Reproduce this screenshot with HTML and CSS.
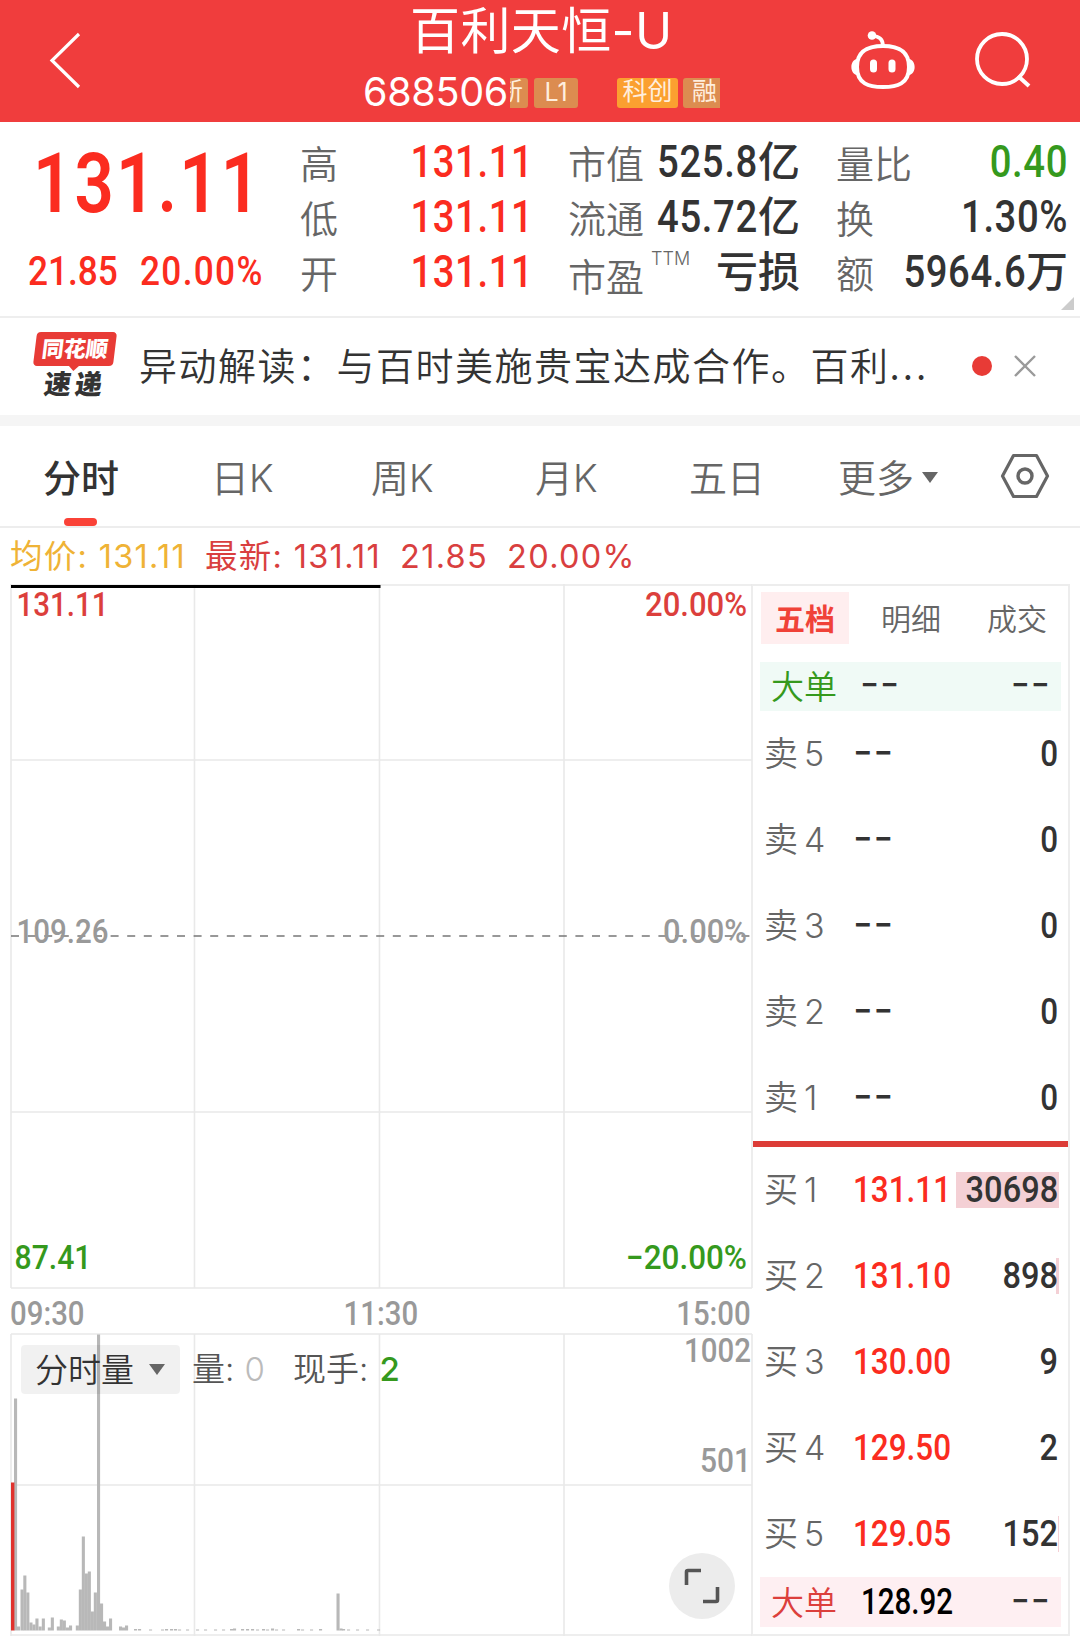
FILE: index.html
```html
<!DOCTYPE html>
<html lang="zh-CN">
<head>
  <meta charset="UTF-8" />
  <meta name="viewport" content="width=device-width, initial-scale=1.0"/>
  <title>百利天恒-U 688506</title>
  <link rel="stylesheet" href="styles.css">
</head>
<body>
  <header class="header">
    <svg class="back" width="34" height="60" viewBox="0 0 34 60">
      <path d="M31 4 L4 30.500 L31 57" fill="none" stroke="#fff" stroke-width="3.2"/>
    </svg>
    <div class="stock">
      <h1>百利天恒-U</h1>
      <div class="stock-sub">
        <span class="code">688506</span>
        <span class="tag tag-new"><span>新</span></span>
        <span class="tag tag-l1">L1</span>
        <span class="tag tag-kc">科创</span>
        <span class="tag tag-rong">融</span>
      </div>
    </div>
    <svg class="robot" width="66" height="60" viewBox="0 0 66 60">
      <path d="M33 15 C47 15 59 19 59 36 C59 53 47 56 33 56 C19 56 7 53 7 36 C7 19 19 15 33 15 Z" fill="none" stroke="#fff" stroke-width="4"/>
      <path d="M22 5 C29 5 33 8 33 15" fill="none" stroke="#fff" stroke-width="3.6"/>
      <circle cx="22" cy="4.500" r="4.300" fill="#fff"/>
      <path d="M7 28 C-0.500 29 -0.500 43 7 44 Z M59 28 C66.500 29 66.500 43 59 44 Z" fill="#fff"/>
      <rect x="20" y="28.500" width="7" height="13" rx="3.500" fill="#fff"/>
      <rect x="38.500" y="28.500" width="7" height="13" rx="3.500" fill="#fff"/>
    </svg>
    <svg class="search" width="60" height="60" viewBox="0 0 60 60">
      <circle cx="29" cy="29" r="25" fill="none" stroke="#fff" stroke-width="3.8"/>
      <path d="M45 46 L56 56" stroke="#fff" stroke-width="4"/>
    </svg>
  </header>

  <section class="quote">
    <div class="price">
      <div class="now num">131.11</div>
      <div class="change"><span class="num">21.85</span><span class="num">20.00%</span></div>
    </div>
    <dl class="stats stats-a">
      <dt>高</dt><dd class="red"><span class="num">131.11</span></dd>
      <dt>低</dt><dd class="red"><span class="num">131.11</span></dd>
      <dt>开</dt><dd class="red"><span class="num">131.11</span></dd>
    </dl>
    <dl class="stats stats-b">
      <dt>市值</dt><dd><span class="num">525.8</span>亿</dd>
      <dt>流通</dt><dd><span class="num">45.72</span>亿</dd>
      <dt class="pe">市盈<sup>TTM</sup></dt><dd>亏损</dd>
    </dl>
    <dl class="stats stats-c">
      <dt>量比</dt><dd class="green"><span class="num">0.40</span></dd>
      <dt>换</dt><dd><span class="num">1.30%</span></dd>
      <dt>额</dt><dd><span class="num">5964.6</span>万</dd>
    </dl>
    <i class="corner"></i>
  </section>

  <section class="news">
    <div class="logo">
      <div class="logo-top"><span>同花顺</span></div>
      <div class="logo-bottom">速递</div>
    </div>
    <p>异动解读：与百时美施贵宝达成合作。百利<span class="dots">...</span></p>
    <i class="dot"></i>
    <svg class="close" width="24" height="24" viewBox="0 0 24 24">
      <path d="M2 2 L22 22 M22 2 L2 22" stroke="#9a9a9a" stroke-width="2.4"/>
    </svg>
  </section>

  <nav class="tabs">
    <a class="active">分时</a>
    <a>日K</a>
    <a>周K</a>
    <a>月K</a>
    <a>五日</a>
    <a class="more">更多<i class="caret"></i></a>
    <svg width="50" height="46" viewBox="0 0 50 46">
      <path d="M13.500 2.500 L36.500 2.500 L47.500 23 L36.500 43.500 L13.500 43.500 L2.500 23 Z" fill="none" stroke="#666" stroke-width="3.2" stroke-linejoin="round"/>
      <circle cx="25" cy="23" r="7" fill="none" stroke="#666" stroke-width="3.4"/>
    </svg>
  </nav>

  <div class="avg">
    <span class="yellow">均价: 131.11</span>
    <span>最新: 131.11</span>
    <span>21.85</span>
    <span>20.00%</span>
  </div>

  <main class="main">
    <div class="charts">
      <!-- 分时走势 -->
      <svg class="chart" width="743" height="706" viewBox="10 584 743 706">
        <path class="grid" d="M11 585H752 M11 760H752 M11 1112H752 M11 1288H752 M11 584V1288 M194.500 584V1288 M379.500 584V1288 M564 584V1288 M752 584V1288"/>
        <path d="M11 936H750" stroke="#777" stroke-width="1.6" stroke-dasharray="8 8.600"/>
        <path d="M11 586.500H380.500" stroke="#000" stroke-width="3"/>
        <text class="up" x="16.500" y="616" textLength="92" lengthAdjust="spacingAndGlyphs">131.11</text>
        <text class="up" x="645" y="616" textLength="102" lengthAdjust="spacingAndGlyphs">20.00%</text>
        <text x="16.500" y="942.500" textLength="92" lengthAdjust="spacingAndGlyphs">109.26</text>
        <text x="663" y="942.500" textLength="84" lengthAdjust="spacingAndGlyphs">0.00%</text>
        <text class="down" x="14.500" y="1269" textLength="77" lengthAdjust="spacingAndGlyphs">87.41</text>
        <text class="down" x="626" y="1269" textLength="121" lengthAdjust="spacingAndGlyphs">−20.00%</text>
      </svg>
      <div class="times num"><span>09:30</span><span>11:30</span><span>15:00</span></div>
      <!-- 成交量 -->
      <div class="volume">
        <svg class="chart" width="743" height="303" viewBox="10 1333 743 303">
          <path class="grid" d="M11 1334H752 M11 1485H752 M11 1635H752 M11 1334V1636 M194.500 1334V1636 M379.500 1334V1636 M564 1334V1636 M752 1334V1636"/>
          <g id="bars" fill="#b8b8b8"></g>
          <text x="684" y="1362" textLength="67" lengthAdjust="spacingAndGlyphs">1002</text>
          <text x="700" y="1471.500" textLength="51" lengthAdjust="spacingAndGlyphs">501</text>
        </svg>
        <div class="vol-head">
          <span class="select">分时量<i class="caret"></i></span>
          <span class="vol">量: <em>0</em></span>
          <span class="hand">现手: <b>2</b></span>
        </div>
        <div class="expand">
          <svg width="36" height="36" viewBox="0 0 36 36">
            <path d="M2.500 17V4Q2.500 2.500 4 2.500H17 M33.500 19V32Q33.500 33.500 32 33.500H19" fill="none" stroke="#555" stroke-width="3.6"/>
          </svg>
        </div>
      </div>
    </div>

    <aside class="book">
      <div class="book-tabs"><span class="on">五档</span><span>明细</span><span>成交</span></div>
      <div class="big big-sell"><span>大单</span><b class="dash">--</b><b class="dash">--</b></div>
      <div class="rows">
        <div class="row"><span>卖<i>5</i></span><b class="dash">--</b><b class="num">0</b></div>
        <div class="row"><span>卖<i>4</i></span><b class="dash">--</b><b class="num">0</b></div>
        <div class="row"><span>卖<i>3</i></span><b class="dash">--</b><b class="num">0</b></div>
        <div class="row"><span>卖<i>2</i></span><b class="dash">--</b><b class="num">0</b></div>
        <div class="row"><span>卖<i>1</i></span><b class="dash">--</b><b class="num">0</b></div>
      </div>
      <div class="rows buy">
        <div class="row"><span>买<i>1</i></span><b class="num red">131.11</b><div class="amt"><u style="width:103px"></u><b class="num">30698</b></div></div>
        <div class="row"><span>买<i>2</i></span><b class="num red">131.10</b><div class="amt"><u style="width:3px"></u><b class="num">898</b></div></div>
        <div class="row"><span>买<i>3</i></span><b class="num red">130.00</b><div class="amt"><b class="num">9</b></div></div>
        <div class="row"><span>买<i>4</i></span><b class="num red">129.50</b><div class="amt"><b class="num">2</b></div></div>
        <div class="row"><span>买<i>5</i></span><b class="num red">129.05</b><div class="amt"><u style="width:1px"></u><b class="num">152</b></div></div>
      </div>
      <div class="big big-buy"><span>大单</span><b class="num">128.92</b><b class="dash">--</b></div>
    </aside>
  </main>

  <script>
    // 每分钟成交量: [x, 高度]
    const bars = [
      [14, 232], [17, 4], [20.5, 41], [23.3, 55], [26.3, 38], [29.4, 8], [32.4, 6], [35.4, 12], [38.6, 4], [41.8, 12],
      [47.8, 3], [50.8, 13], [56.8, 4], [59.8, 11], [62.8, 10], [66, 3], [69, 5], [75.8, 5], [78.8, 41], [81.8, 94],
      [84.8, 57], [87.8, 59], [90.8, 19], [93.8, 38], [97, 296], [100, 27], [103, 9], [106, 4], [109, 12],
      [119, 4], [122, 3], [125, 5], [134, 1.5], [138, 1.5], [149, 1], [161, 1], [165, 1.5], [170, 1.5], [174, 1.5],
      [178, 1], [186, 1], [196, 1], [204, 1], [214, 1], [222, 1], [230, 1.5], [233, 2], [241, 1.5], [246, 1.5],
      [251, 1.5], [256, 1], [262, 1.5], [266, 1], [271, 2], [275, 1], [282, 1], [297, 1.5], [301, 1], [310, 1],
      [319, 1.5], [336.5, 37], [339.5, 2], [342, 1.5], [347, 1], [356, 1], [366, 1], [377, 1]
    ];
    const g = document.getElementById('bars');
    const bottom = 1630.5;

    function addBar(x, w, h, color) {
      const r = document.createElementNS('http://www.w3.org/2000/svg', 'rect');
      r.setAttribute('x', x);
      r.setAttribute('y', bottom - h);
      r.setAttribute('width', w);
      r.setAttribute('height', h);
      if (color) r.setAttribute('fill', color);
      g.appendChild(r);
    }

    bars.forEach(b => addBar(b[0], 3.1, b[1]));
    addBar(11, 3.4, 148, '#e0322d');
  </script>
</body>
</html>
```
FILE: styles.css
```css
* {
  box-sizing: border-box;
  margin: 0;
  padding: 0;
}

body {
  font-family: Inter, 'Noto Sans CJK SC', sans-serif;
  background: #fff;
  color: #333;
  width: 1080px;
  height: 1636px;
  overflow: hidden;
}

i, em {
  font-style: normal;
}

.num {
  font-family: Roboto, 'Noto Sans CJK SC', sans-serif;
  font-weight: 500;
}

.red { color: #fb2c20; }
.green { color: #35991d; }
.yellow { color: #efb336; }

/* 顶部 */
.header {
  height: 122px;
  background: #f03d3d;
  color: #fff;
  display: flex;
  align-items: flex-start;
}

.back {
  margin: 30px 0 0 48px;
}

.stock {
  width: 361px;
  margin-left: 281px;
}

.stock h1 {
  font-size: 50px;
  font-weight: 380;
  line-height: 60px;
  height: 60px;
  margin-top: 1px;
  padding-left: 47px;
  letter-spacing: 0.4px;
  white-space: nowrap;
}

.stock-sub {
  display: flex;
  align-items: center;
  height: 30px;
  margin-top: 17px;
}

.code {
  font-size: 39.5px;
  font-weight: 380;
  line-height: 28px;
  width: 147px;
  margin-top: -2px;
  letter-spacing: -0.3px;
}

.tag {
  height: 30px;
  line-height: 27px;
  font-size: 25px;
  font-weight: 380;
  text-align: center;
  background: #dc8c50;
  border-radius: 3px;
  color: #ffeedd;
}

.tag-new {
  width: 18px;
  overflow: hidden;
  display: flex;
  justify-content: flex-end;
  padding-right: 5px;
  border-radius: 0 3px 3px 0;
}

.tag-l1 { width: 44px; margin-left: 6px; line-height: 29px; }
.tag-kc { width: 61px; margin-left: 39px; background: #fba030; }
.tag-rong { width: 37px; margin-left: 5px; padding-left: 6px; border-radius: 3px 0 0 3px; }

.robot {
  margin: 31px 0 0 126px;
}

.search {
  margin: 30px 0 0 57px;
}

/* 行情 */
.quote {
  position: relative;
  height: 196px;
  border-bottom: 2px solid #eee;
  display: flex;
}

.price {
  width: 300px;
  padding: 20px 0 0 28px;
  color: #fb2c20;
}

.now {
  font-size: 84px;
  line-height: 84px;
  font-weight: 600;
  letter-spacing: 2.6px;
  transform: scaleX(0.82);
  transform-origin: left;
  margin-left: 5px;
}

.change {
  display: flex;
  margin-top: 26px;
  font-size: 40px;
  line-height: 40px;
}

.change span {
  width: 112px;
  transform: scaleX(0.88);
  transform-origin: left;
}

.change span:last-child {
  letter-spacing: 1.5px;
}

.stats {
  display: grid;
  grid-template-columns: 75px minmax(0, 1fr);
  grid-auto-rows: 55.3px;
  align-items: center;
  padding-top: 12px;
  font-size: 38px;
}

.stats dt {
  color: #666;
  font-weight: 350;
  line-height: 50px;
  white-space: nowrap;
  padding-top: 4px;
}

.stats dd {
  display: flex;
  justify-content: flex-end;
  align-items: center;
  font-weight: 500;
  font-size: 42px;
  line-height: 50px;
  white-space: nowrap;
}

.stats .num {
  font-size: 44px;
  letter-spacing: 0.7px;
  transform: scaleX(0.87);
  transform-origin: right;
}

.stats-a { width: 233px; }
.stats-b { width: 232px; margin-left: 35px; }
.stats-c { width: 232px; margin-left: 36px; }

.stats .pe {
  padding-top: 7px;
}

.pe sup {
  font-size: 18px;
  line-height: 18px;
  vertical-align: 26px;
  margin-left: 7px;
}

.corner {
  position: absolute;
  right: 6px;
  bottom: 6px;
  border-left: 13px solid transparent;
  border-bottom: 13px solid #ccc;
}

/* 速递 */
.news {
  height: 108px;
  border-bottom: 11px solid #f5f5f5;
  display: flex;
  align-items: center;
}

.logo {
  flex: none;
  width: 139px;
  padding: 0 24px 0 35px;
  font-weight: 900;
  margin-top: -2px;
}

.logo-top {
  position: relative;
  width: 80px;
  height: 34px;
  background: #e83b36;
  border-radius: 4px;
  color: #fff;
  font-size: 22px;
  line-height: 35px;
  text-align: center;
  transform: skewX(-7deg);
}

.logo-top::after {
  content: "";
  position: absolute;
  left: 35px;
  top: 33px;
  border: 6px solid transparent;
  border-top-color: #e83b36;
  border-bottom: 0;
}

.logo-bottom {
  height: 28px;
  margin-top: 5px;
  padding-left: 9px;
  font-size: 27px;
  line-height: 28px;
  letter-spacing: 4px;
  overflow: hidden;
  transform: skewX(-7deg);
}

.news p {
  flex: none;
  width: 831px;
  font-family: 'Noto Sans CJK SC', sans-serif;
  font-weight: 350;
  font-size: 38px;
  letter-spacing: 1.5px;
  line-height: 48px;
  margin-top: -5px;
  white-space: nowrap;
}

.dots {
  letter-spacing: 3px;
}

.dot {
  width: 20px;
  height: 20px;
  margin: -2px 0 0 2px;
  border-radius: 50%;
  background: #e83b36;
}

.close {
  margin: -2px 0 0 21px;
}

/* 周期切换 */
.tabs {
  position: relative;
  height: 102px;
  border-bottom: 2px solid #ededed;
  display: flex;
  align-items: center;
  font-weight: 350;
  font-size: 38px;
  color: #666;
  padding-left: 43px;
}

.tabs a {
  line-height: 50px;
  white-space: nowrap;
  width: 159px;
  margin-top: 3px;
}

.tabs a:nth-child(1) { width: 168px; }
.tabs a:nth-child(2) { width: 160px; }
.tabs a:nth-child(3) { width: 164px; }
.tabs a:nth-child(4) { width: 154px; }
.tabs a:nth-child(5) { width: 149px; }
.tabs a:nth-child(6) { width: 162px; }

.tabs .active {
  color: #333;
  font-weight: 500;
}

.tabs .active::after {
  content: "";
  position: absolute;
  left: 64px;
  bottom: 0;
  width: 33px;
  height: 8px;
  border-radius: 4px;
  background: #fa4237;
}

.caret {
  display: inline-block;
  border: 8.5px solid transparent;
  border-top: 11px solid #666;
  border-bottom: 0;
  vertical-align: 9px;
  margin-left: 8px;
}

/* 均价行 */
.avg {
  height: 56px;
  display: flex;
  align-items: baseline;
  gap: 19px;
  padding: 11px 0 0 10px;
  font-size: 32.5px;
  font-weight: 380;
  line-height: 36px;
  letter-spacing: 1.3px;
  color: #d93f3f;
  white-space: nowrap;
}

.main {
  display: flex;
  height: 1052px;
  padding-left: 10px;
}

.charts {
  width: 743px;
}

.chart {
  display: block;
}

.chart text {
  font-family: Roboto, sans-serif;
  font-weight: 500;
  font-size: 33px;
  fill: #999;
}

.chart .up { fill: #dc3f3c; }
.chart .down { fill: #35991d; }

.grid {
  fill: none;
  stroke: #e9e9e9;
  stroke-width: 1.6;
}

.times {
  height: 43px;
  display: flex;
  justify-content: space-between;
  align-items: center;
  padding: 3px 2px 0 0;
  font-size: 33px;
  color: #999;
}

.times span {
  transform: scaleX(0.89);
}

.times span:first-child {
  transform-origin: left;
}

.times span:last-child {
  transform-origin: right;
}

.volume {
  position: relative;
}

.vol-head {
  position: absolute;
  left: 11px;
  top: 12px;
  display: flex;
  align-items: center;
  height: 49px;
  font-weight: 350;
  font-size: 33px;
  line-height: 51px;
  white-space: nowrap;
  color: #555;
}

.select {
  width: 159px;
  height: 49px;
  padding-left: 14px;
  background: rgba(0, 0, 0, 0.055);
  border-radius: 4px;
  color: #333;
}

.select .caret {
  margin-left: 15px;
  vertical-align: 7px;
}

.vol {
  margin-left: 12px;
}

.vol em {
  color: #bbb;
  margin-left: 1px;
}

.hand {
  margin-left: 28px;
}

.hand b {
  color: #35991d;
  font-weight: 500;
  margin-left: 2px;
}

.expand {
  position: absolute;
  left: 659px;
  top: 220px;
  width: 66px;
  height: 66px;
  border-radius: 50%;
  background: #ececec;
  display: flex;
  align-items: center;
  justify-content: center;
}

/* 五档盘口 */
.book {
  width: 317px;
  border: 2px solid #ededed;
  border-left: 0;
}

.book-tabs {
  display: flex;
  height: 58px;
  padding: 6px 0 0 8px;
  font-weight: 350;
  font-size: 30px;
  color: #666;
}

.book-tabs span {
  flex: none;
  width: 88px;
  height: 52px;
  line-height: 54px;
  text-align: center;
  margin-right: 18px;
}

.book-tabs span:last-child {
  margin-right: 0;
}

.book-tabs .on {
  background: #ffeeef;
  color: #f04238;
  font-weight: 700;
}

.big {
  display: flex;
  align-items: center;
  height: 49px;
  margin: 18px 7px 0;
  padding: 0 10px 0 11px;
}

.big span {
  width: 89px;
  font-size: 33px;
  font-weight: 350;
  line-height: 46px;
  margin-top: 1px;
}

.big-sell {
  background: #f0faf6;
  color: #35991d;
}

.big-buy {
  background: #feeff2;
  color: #dc3f3c;
  height: 50px;
  margin-top: 0;
}

.big b {
  font-size: 36px;
  color: #333;
}

.big b:last-child {
  margin-left: auto;
  transform-origin: right;
}

.big .num {
  color: #000;
  font-size: 36px;
  width: 90px;
  transform: scaleX(0.82);
  transform-origin: left;
  margin-left: 1px;
}

.dash {
  font-weight: 450;
  letter-spacing: 0.8px;
  transform: scaleX(1.15);
  transform-origin: left;
  margin-top: -7px;
}

.row {
  display: flex;
  align-items: center;
  height: 86px;
  padding-left: 11px;
}

.row span {
  width: 89px;
  font-weight: 350;
  font-size: 34px;
  line-height: 44px;
  color: #666;
}

.row i {
  margin-left: 6px;
}

.row > b {
  width: 100px;
  font-size: 37px;
  line-height: 44px;
}

.row .num {
  font-size: 37px;
  font-weight: 500;
  margin-top: -1px;
  transform: scaleX(0.85);
  transform-origin: left;
}

.row .dash {
  margin-top: -7px;
}

.row > .num:last-child {
  width: auto;
  margin: -1px 10px 0 auto;
  transform-origin: right;
}

.buy {
  border-top: 6px solid #dc3c37;
}

.amt {
  position: relative;
  display: flex;
  justify-content: flex-end;
  width: 103px;
  height: 36px;
  line-height: 38px;
  margin-left: 3px;
  padding-right: 1px;
}

.amt u {
  position: absolute;
  right: 0;
  top: 0;
  height: 36px;
  background: #f4d0d5;
}

.row .amt .num {
  position: relative;
  transform: scaleX(0.88);
  transform-origin: right;
}
```
